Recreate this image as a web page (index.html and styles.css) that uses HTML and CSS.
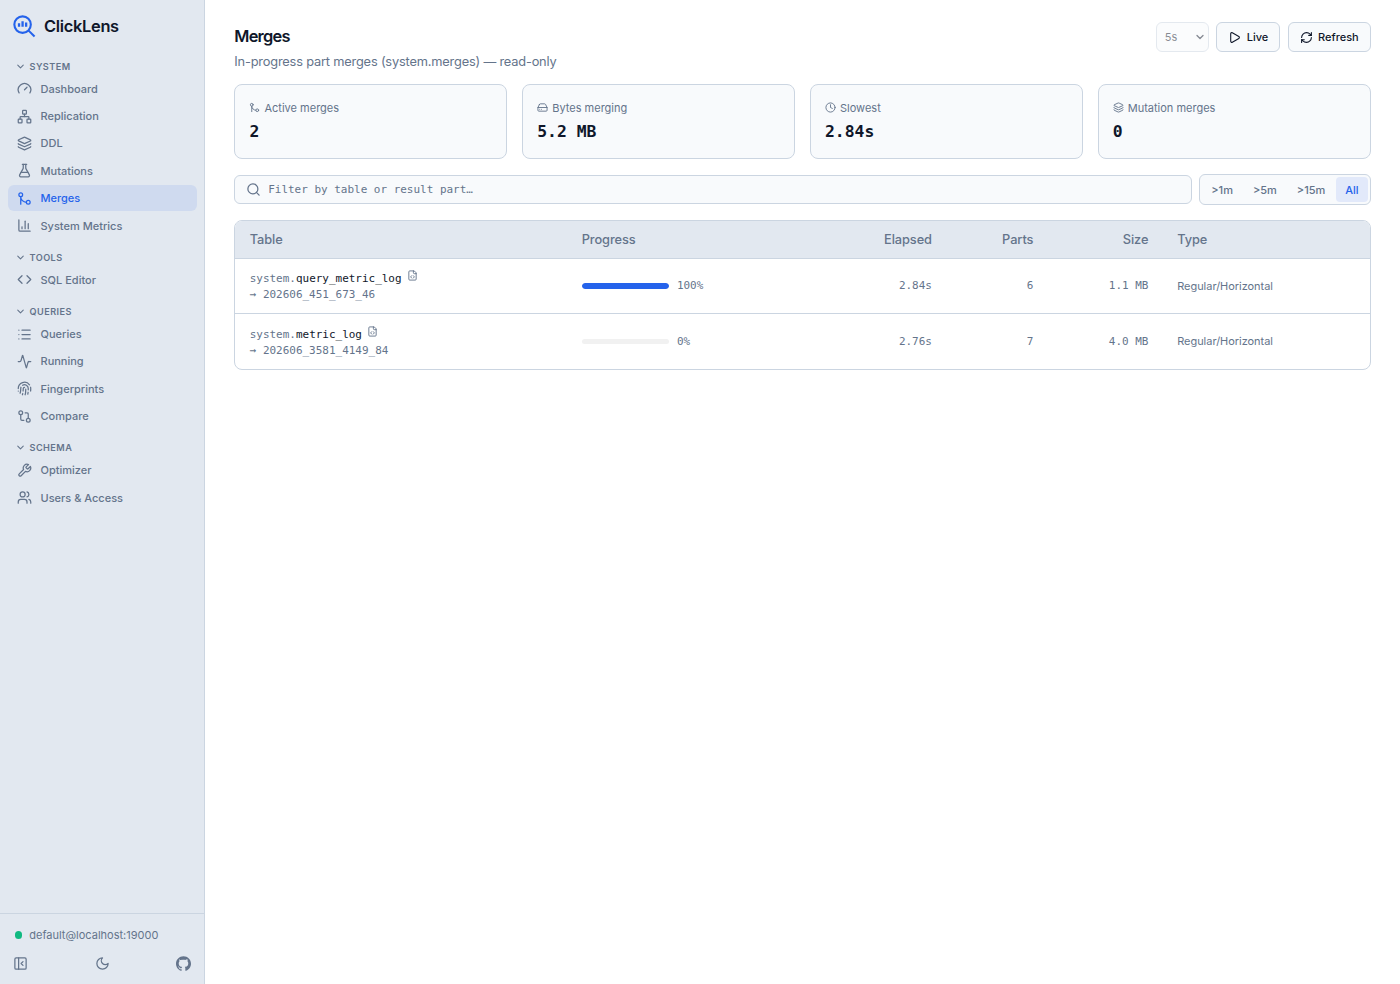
FILE: index.html
```html
<!DOCTYPE html>
<html lang="en">
	<head>
		<meta charset="utf-8">
		<title>ClickLens - Merges</title>
		<link rel="stylesheet" href="styles.css">
	</head>
	<body>
		<!-- shared icons -->
		<svg class="sprite">
			<symbol id="i-chevron" viewBox="0 0 24 24"><path d="m6 9 6 6 6-6"/></symbol>
			<symbol id="i-merge" viewBox="0 0 24 24"><circle cx="18" cy="18" r="3"/><circle cx="6" cy="6" r="3"/><path d="M6 21V9a9 9 0 0 0 9 9"/></symbol>
			<symbol id="i-layers" viewBox="0 0 24 24"><path d="M12.83 2.18a2 2 0 0 0-1.66 0L2.6 6.08a1 1 0 0 0 0 1.83l8.58 3.91a2 2 0 0 0 1.66 0l8.58-3.9a1 1 0 0 0 0-1.83z"/><path d="M2 12a1 1 0 0 0 .58.91l8.6 3.91a2 2 0 0 0 1.65 0l8.58-3.9A1 1 0 0 0 22 12"/><path d="M2 17a1 1 0 0 0 .58.91l8.6 3.91a2 2 0 0 0 1.65 0l8.58-3.9A1 1 0 0 0 22 17"/></symbol>
			<symbol id="i-filecode" viewBox="0 0 24 24"><path d="M15 2H6a2 2 0 0 0-2 2v16a2 2 0 0 0 2 2h12a2 2 0 0 0 2-2V7z"/><path d="M14 2v4a2 2 0 0 0 2 2h4"/><path d="M10 12.5 8 15l2 2.5"/><path d="m14 12.5 2 2.5-2 2.5"/></symbol>
		</svg>

		<div class="app">
			<aside class="sidebar">
				<div class="brand">
					<svg class="logo" viewBox="0 0 24 24"><circle cx="10" cy="10" r="8.6"/><path d="m16.3 16.3 6.2 6.2"/><path class="bars" d="M6.3 8.6v3.6M10 6.4v5.8M13.7 7.8v4.4"/></svg>
					<span>ClickLens</span>
				</div>

				<nav>
					<div class="group">
						<div class="group-title"><svg class="icon"><use href="#i-chevron"/></svg>System</div>
						<a class="item"><svg class="icon" viewBox="0 0 24 24"><path d="m12 14 4-4"/><path d="M3.34 19a10 10 0 1 1 17.32 0"/></svg>Dashboard</a>
						<a class="item"><svg class="icon" viewBox="0 0 24 24"><rect x="16" y="16" width="6" height="6" rx="1"/><rect x="2" y="16" width="6" height="6" rx="1"/><rect x="9" y="2" width="6" height="6" rx="1"/><path d="M5 16v-3a1 1 0 0 1 1-1h12a1 1 0 0 1 1 1v3"/><path d="M12 12V8"/></svg>Replication</a>
						<a class="item"><svg class="icon"><use href="#i-layers"/></svg>DDL</a>
						<a class="item"><svg class="icon" viewBox="0 0 24 24"><path d="M14 2v6a2 2 0 0 0 .245.96l5.51 10.08A2 2 0 0 1 18 22H6a2 2 0 0 1-1.755-2.96l5.51-10.08A2 2 0 0 0 10 8V2"/><path d="M6.453 15h11.094"/><path d="M8.5 2h7"/></svg>Mutations</a>
						<a class="item active"><svg class="icon"><use href="#i-merge"/></svg>Merges</a>
						<a class="item"><svg class="icon" viewBox="0 0 24 24"><path d="M3 3v16a2 2 0 0 0 2 2h16"/><path d="M18 17V9"/><path d="M13 17V5"/><path d="M8 17v-3"/></svg>System Metrics</a>
					</div>
					<div class="group">
						<div class="group-title"><svg class="icon"><use href="#i-chevron"/></svg>Tools</div>
						<a class="item"><svg class="icon" viewBox="0 0 24 24"><path d="m16 18 6-6-6-6"/><path d="m8 6-6 6 6 6"/></svg>SQL Editor</a>
					</div>
					<div class="group">
						<div class="group-title"><svg class="icon"><use href="#i-chevron"/></svg>Queries</div>
						<a class="item"><svg class="icon" viewBox="0 0 24 24"><path d="M3 5h.01M3 12h.01M3 19h.01M8 5h13M8 12h13M8 19h13"/></svg>Queries</a>
						<a class="item"><svg class="icon" viewBox="0 0 24 24"><path d="M22 12h-2.48a2 2 0 0 0-1.93 1.46l-2.35 8.36a.25.25 0 0 1-.48 0L9.24 2.18a.25.25 0 0 0-.48 0l-2.35 8.36A2 2 0 0 1 4.49 12H2"/></svg>Running</a>
						<a class="item"><svg class="icon" viewBox="0 0 24 24"><path d="M12 10a2 2 0 0 0-2 2c0 1.02-.1 2.51-.26 4"/><path d="M14 13.12c0 2.38 0 6.38-1 8.88"/><path d="M17.29 21.02c.12-.6.43-2.3.5-3.02"/><path d="M2 12a10 10 0 0 1 18-6"/><path d="M2 16h.01"/><path d="M21.8 16c.2-2 .131-5.354 0-6"/><path d="M5 19.5C5.5 18 6 15 6 12a6 6 0 0 1 .34-2"/><path d="M8.65 22c.21-.66.45-1.32.57-2"/><path d="M9 6.8a6 6 0 0 1 9 5.2v2"/></svg>Fingerprints</a>
						<a class="item"><svg class="icon" viewBox="0 0 24 24"><circle cx="18" cy="18" r="3"/><circle cx="6" cy="6" r="3"/><path d="M13 6h3a2 2 0 0 1 2 2v7"/><path d="M11 18H8a2 2 0 0 1-2-2V9"/></svg>Compare</a>
					</div>
					<div class="group">
						<div class="group-title"><svg class="icon"><use href="#i-chevron"/></svg>Schema</div>
						<a class="item"><svg class="icon" viewBox="0 0 24 24"><path d="M14.7 6.3a1 1 0 0 0 0 1.4l1.6 1.6a1 1 0 0 0 1.4 0l3.77-3.77a6 6 0 0 1-7.94 7.94l-6.91 6.91a2.12 2.12 0 0 1-3-3l6.91-6.91a6 6 0 0 1 7.94-7.94l-3.76 3.76z"/></svg>Optimizer</a>
						<a class="item"><svg class="icon" viewBox="0 0 24 24"><path d="M16 21v-2a4 4 0 0 0-4-4H6a4 4 0 0 0-4 4v2"/><circle cx="9" cy="7" r="4"/><path d="M22 21v-2a4 4 0 0 0-3-3.87"/><path d="M16 3.13a4 4 0 0 1 0 7.75"/></svg>Users &amp; Access</a>
					</div>
				</nav>

				<div class="footer">
					<div class="conn"><span class="dot"></span>default@localhost:19000</div>
					<div class="tools">
						<svg class="icon" viewBox="0 0 24 24"><rect x="3" y="3" width="18" height="18" rx="2"/><path d="M9 3v18"/><path d="m16 15-3-3 3-3"/></svg>
						<svg class="icon" viewBox="0 0 24 24"><path d="M12 3a6 6 0 0 0 9 9 9 9 0 1 1-9-9"/></svg>
						<svg class="github" viewBox="0 0 24 24"><path d="M12 .297c-6.63 0-12 5.373-12 12 0 5.303 3.438 9.8 8.205 11.385.6.113.82-.258.82-.577 0-.285-.01-1.04-.015-2.04-3.338.724-4.042-1.61-4.042-1.61C4.422 18.07 3.633 17.7 3.633 17.7c-1.087-.744.084-.729.084-.729 1.205.084 1.838 1.236 1.838 1.236 1.07 1.835 2.809 1.305 3.495.998.108-.776.417-1.305.76-1.605-2.665-.3-5.466-1.332-5.466-5.93 0-1.31.465-2.38 1.235-3.22-.135-.303-.54-1.523.105-3.176 0 0 1.005-.322 3.3 1.23.96-.267 1.98-.399 3-.405 1.02.006 2.04.138 3 .405 2.28-1.552 3.285-1.23 3.285-1.23.645 1.653.24 2.873.12 3.176.765.84 1.23 1.91 1.23 3.22 0 4.61-2.805 5.625-5.475 5.92.42.36.81 1.096.81 2.22 0 1.606-.015 2.896-.015 3.286 0 .315.21.69.825.57C20.565 22.092 24 17.592 24 12.297c0-6.627-5.373-12-12-12"/></svg>
					</div>
				</div>
			</aside>

			<main>
				<header>
					<div>
						<h1>Merges</h1>
						<p class="sub">In-progress part merges (system.merges) — read-only</p>
					</div>
					<div class="actions">
						<div class="select">5s<svg class="icon"><use href="#i-chevron"/></svg></div>
						<button class="btn"><svg class="icon" viewBox="0 0 24 24"><path d="M5 5a2 2 0 0 1 3.008-1.728l11.997 6.998a2 2 0 0 1 .003 3.458l-12 7A2 2 0 0 1 5 19z"/></svg>Live</button>
						<button class="btn"><svg class="icon" viewBox="0 0 24 24"><path d="M3 12a9 9 0 0 1 9-9 9.75 9.75 0 0 1 6.74 2.74L21 8"/><path d="M21 3v5h-5"/><path d="M21 12a9 9 0 0 1-9 9 9.75 9.75 0 0 1-6.74-2.74L3 16"/><path d="M8 16H3v5"/></svg>Refresh</button>
					</div>
				</header>

				<section class="cards">
					<div class="card">
						<div class="label"><svg class="icon"><use href="#i-merge"/></svg>Active merges</div>
						<div class="value">2</div>
					</div>
					<div class="card">
						<div class="label"><svg class="icon" viewBox="0 0 24 24"><path d="M22 12H2"/><path d="M5.45 5.11 2 12v6a2 2 0 0 0 2 2h16a2 2 0 0 0 2-2v-6l-3.45-6.89A2 2 0 0 0 16.76 4H7.24a2 2 0 0 0-1.79 1.11z"/><path d="M6 16h.01M10 16h.01"/></svg>Bytes merging</div>
						<div class="value">5.2 MB</div>
					</div>
					<div class="card">
						<div class="label"><svg class="icon" viewBox="0 0 24 24"><circle cx="12" cy="12" r="10"/><path d="M12 6v6l4 2"/></svg>Slowest</div>
						<div class="value">2.84s</div>
					</div>
					<div class="card">
						<div class="label"><svg class="icon"><use href="#i-layers"/></svg>Mutation merges</div>
						<div class="value">0</div>
					</div>
				</section>

				<div class="filters">
					<div class="search">
						<svg class="icon" viewBox="0 0 24 24"><circle cx="11" cy="11" r="8"/><path d="m21 21-4.34-4.34"/></svg>
						<input type="text" placeholder="Filter by table or result part…">
					</div>
					<div class="segment">
						<span>&gt;1m</span>
						<span>&gt;5m</span>
						<span>&gt;15m</span>
						<span class="on">All</span>
					</div>
				</div>

				<div class="table-box">
					<table>
						<colgroup><col class="c-table"><col class="c-progress"><col class="c-elapsed"><col class="c-parts"><col class="c-size"><col></colgroup>
						<thead>
							<tr><th>Table</th><th>Progress</th><th class="num">Elapsed</th><th class="num">Parts</th><th class="num">Size</th><th>Type</th></tr>
						</thead>
						<tbody>
							<tr>
								<td>
									<div class="name">system.<b>query_metric_log</b><svg class="icon"><use href="#i-filecode"/></svg></div>
									<div class="part">→ 202606_451_673_46</div>
								</td>
								<td><div class="progress"><div class="track"><div class="fill" style="width:100%"></div></div>100%</div></td>
								<td class="num">2.84s</td>
								<td class="num">6</td>
								<td class="num">1.1 MB</td>
								<td class="type">Regular/Horizontal</td>
							</tr>
							<tr>
								<td>
									<div class="name">system.<b>metric_log</b><svg class="icon"><use href="#i-filecode"/></svg></div>
									<div class="part">→ 202606_3581_4149_84</div>
								</td>
								<td><div class="progress"><div class="track"><div class="fill" style="width:0%"></div></div>0%</div></td>
								<td class="num">2.76s</td>
								<td class="num">7</td>
								<td class="num">4.0 MB</td>
								<td class="type">Regular/Horizontal</td>
							</tr>
						</tbody>
					</table>
				</div>
			</main>
		</div>
	</body>
</html>
```
FILE: styles.css
```css
*
{
	box-sizing: border-box;
}
body
{
	margin: 0;
	background: #fff;
	color: #0f172a;
	font-family: Inter, sans-serif;
	font-size: 11px;
}
.sprite
{
	display: none;
}
.icon
{
	flex: none;
	width: 15px;
	height: 15px;
	fill: none;
	stroke: currentColor;
	stroke-width: 2;
	stroke-linecap: round;
	stroke-linejoin: round;
}
.app
{
	display: flex;
	height: 984px;
}

/* sidebar */
.sidebar
{
	display: flex;
	flex-direction: column;
	flex: none;
	width: 205px;
	background: #e2e8f0;
	border-right: 1px solid #cbd5e1;
	color: #64748b;
}
.brand
{
	display: flex;
	align-items: center;
	gap: 8px;
	height: 52px;
	padding-left: 13px;
	color: #0f172a;
	font-size: 16.4px;
	font-weight: 600;
	letter-spacing: -0.3px;
}
.logo
{
	width: 23px;
	height: 23px;
	fill: none;
	stroke: #2563eb;
	stroke-width: 2.2;
}
.logo .bars
{
	stroke-width: 2.4;
}
nav
{
	flex: 1;
	padding: 6.3px 7.5px 0;
}
.group
{
	margin-bottom: 11px;
}
.group-title
{
	display: flex;
	align-items: center;
	gap: 3.5px;
	height: 15.6px;
	margin-bottom: 2px;
	padding-left: 7.5px;
	font-size: 9.14px;
	font-weight: 600;
	letter-spacing: 0.45px;
	text-transform: uppercase;
}
.group-title .icon
{
	width: 11px;
	height: 11px;
	stroke-width: 2.3;
}
.item
{
	display: flex;
	align-items: center;
	gap: 9px;
	height: 25.6px;
	padding-left: 9px;
	border-radius: 6px;
	font-weight: 500;
}
.item + .item
{
	margin-top: 1.8px;
}
.active
{
	background: #cfdaef;
	color: #2563eb;
}
.footer
{
	height: 71px;
	border-top: 1px solid #cbd5e1;
}
.conn
{
	display: flex;
	align-items: center;
	gap: 7px;
	padding: 14px 15px 0;
}
.dot
{
	width: 7.3px;
	height: 7.3px;
	border-radius: 50%;
	background: #10b981;
}
.tools
{
	display: flex;
	justify-content: space-between;
	align-items: center;
	padding: 14px 13px 0;
}
.github
{
	width: 15px;
	height: 15px;
	fill: currentColor;
}

/* page */
main
{
	flex: 1;
	padding: 22px 29.3px 0;
}
header
{
	display: flex;
	justify-content: space-between;
	height: 62px;
}
h1
{
	margin: 2.5px 0 0;
	font-size: 16.4px;
	font-weight: 600;
	line-height: 22px;
	letter-spacing: -0.75px;
}
.sub
{
	margin: 6.5px 0 0;
	color: #64748b;
	font-size: 12.8px;
	line-height: 18px;
	letter-spacing: -0.18px;
}
.actions
{
	display: flex;
	gap: 7.3px;
	height: 30px;
}
.select, .btn
{
	display: flex;
	align-items: center;
	border: 1px solid #cbd5e1;
	border-radius: 6px;
	background: #f8fafc;
	color: #0f172a;
	font-family: inherit;
	font-size: 11px;
}
.select
{
	justify-content: space-between;
	width: 53px;
	padding: 0 2px 0 8px;
	opacity: 0.5;
}
.select .icon
{
	width: 12px;
	height: 12px;
	stroke-width: 2.6;
}
.btn
{
	gap: 5.5px;
	padding: 0 11px;
	font-weight: 500;
}
.btn .icon
{
	width: 13px;
	height: 13px;
}
.cards
{
	display: grid;
	grid-template-columns: repeat(4, 1fr);
	gap: 14.6px;
}
.card
{
	height: 75px;
	padding: 15px 14.2px;
	border: 1px solid #cbd5e1;
	border-radius: 8px;
	background: #f8fafc;
}
.label
{
	display: flex;
	align-items: center;
	gap: 4px;
	height: 15px;
	color: #64748b;
}
.label .icon
{
	width: 11px;
	height: 11px;
}
.value
{
	margin-top: 6px;
	font-family: "DejaVu Sans Mono", monospace;
	font-size: 16.4px;
	font-weight: 700;
	line-height: 22px;
}
.filters
{
	display: flex;
	align-items: center;
	gap: 7.3px;
	margin-top: 15px;
}
.search
{
	display: flex;
	align-items: center;
	flex: 1;
	gap: 7.5px;
	height: 29px;
	padding: 0 10.4px;
	border: 1px solid #cbd5e1;
	border-radius: 6px;
	background: #f8fafc;
	color: #64748b;
}
.search input
{
	flex: 1;
	padding: 0;
	border: 0;
	outline: 0;
	background: none;
	font-family: "DejaVu Sans Mono", monospace;
	font-size: 10.97px;
}
.search input::placeholder
{
	color: #64748b;
}
.segment
{
	display: flex;
	gap: 1.8px;
	height: 31px;
	padding: 2px;
	border: 1px solid #cbd5e1;
	border-radius: 6px;
	background: #f8fafc;
	color: #64748b;
	font-weight: 500;
}
.segment span
{
	display: flex;
	align-items: center;
	padding: 0 9.1px;
	border-radius: 4px;
}
.segment .on
{
	background: #e2e9fa;
	color: #2563eb;
}

/* merges table */
.table-box
{
	margin-top: 14.5px;
	border: 1px solid #cbd5e1;
	border-radius: 8px;
	overflow: hidden;
}
table
{
	width: 100%;
	border-collapse: separate;
	border-spacing: 0;
	table-layout: fixed;
	color: #64748b;
}
.c-table { width: 332px; }
.c-progress { width: 272px; }
.c-elapsed { width: 107px; }
.c-parts { width: 101.5px; }
.c-size { width: 115px; }
th
{
	height: 37px;
	padding: 1.5px 14.4px 0;
	background: #e2e8f0;
	font-size: 12.8px;
	font-weight: 500;
	letter-spacing: -0.08px;
	text-align: left;
}
td
{
	height: 55.5px;
	padding: 0 14.4px;
	border-top: 1px solid #cbd5e1;
	font-family: "DejaVu Sans Mono", monospace;
	font-size: 10.97px;
}
.num
{
	text-align: right;
}
.name
{
	display: flex;
	margin-top: 3px;
	line-height: 16px;
}
.name b
{
	color: #0f172a;
	font-weight: 400;
}
.name .icon
{
	width: 11px;
	height: 11px;
	margin: -1px 0 0 5.5px;
}
.part
{
	line-height: 16px;
}
.progress
{
	display: flex;
	align-items: center;
	gap: 7.5px;
}
.track
{
	width: 87.7px;
	height: 5.5px;
	border-radius: 3px;
	background: #f1f1f1;
	overflow: hidden;
}
.fill
{
	height: 100%;
	border-radius: 3px;
	background: #2563eb;
}
.type
{
	font-family: inherit;
	letter-spacing: -0.02px;
}
```
